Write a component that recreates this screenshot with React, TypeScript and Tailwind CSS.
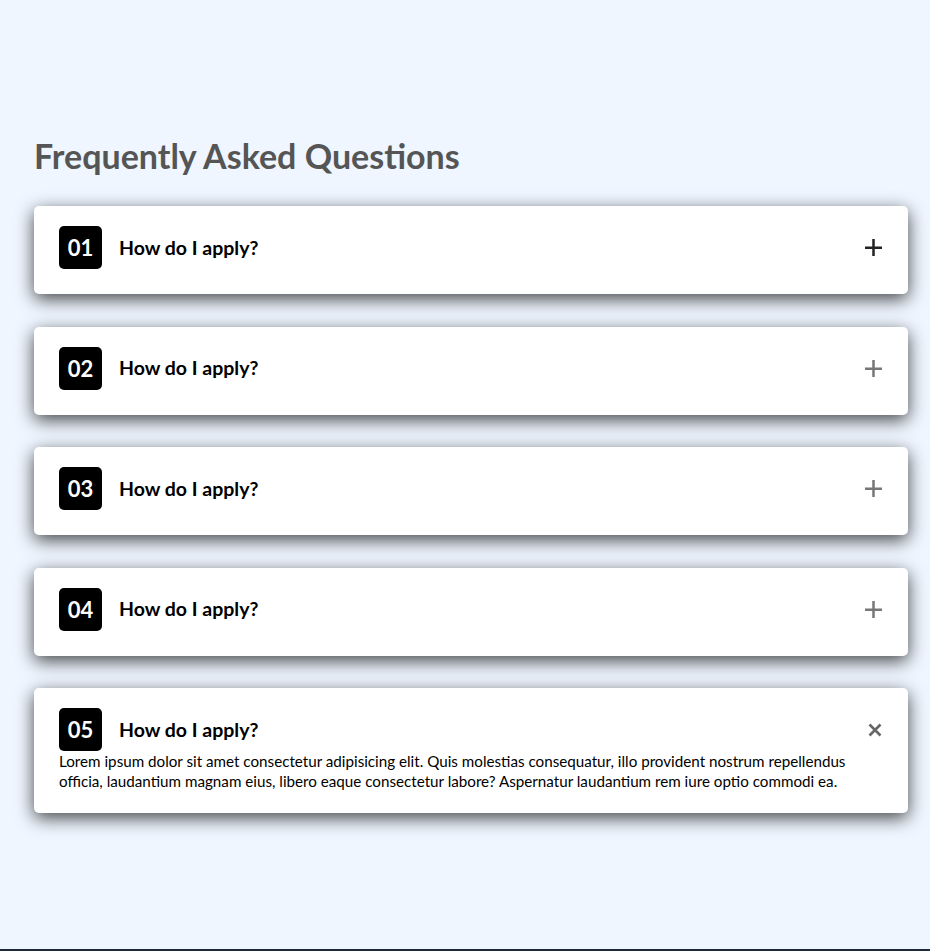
import React from "react";

const items = ["01", "02", "03", "04", "05"];

function PlusIcon({ dark }: { dark: boolean }) {
  return (
    <svg width="17" height="17" viewBox="0 0 17 17" className={dark ? "text-[#222]" : "text-[#777]"}>
      <rect x="0" y="7.5" width="17" height="2.5" fill="currentColor" />
      <rect x="7.25" y="0" width="2.5" height="17" fill="currentColor" />
    </svg>
  );
}

function CloseIcon() {
  return (
    <svg width="14" height="14" viewBox="0 0 14 14" className="text-[#666]">
      <path d="M1.5 1.5 L12.5 12.5 M12.5 1.5 L1.5 12.5" stroke="currentColor" strokeWidth="2.6" strokeLinecap="butt" />
    </svg>
  );
}

export default function App() {
  return (
    <div className="min-h-[951px] bg-[#1f2937]" style={{ fontFamily: '"Lato", "Open Sans", sans-serif' }}>
      <div className="h-[949px] bg-[#eff6ff] pt-[134px]">
        <div className="ml-[34px] w-[874px]">
          <h1 className="text-[34px] leading-[44px] font-bold text-[#555]">Frequently Asked Questions</h1>
          <div className="mt-[28px] flex flex-col gap-[32.5px]">
            {items.map((n, i) => {
              const open = i === 4;
              return (
                <div
                  key={n}
                  className={`bg-white rounded-[5px] pl-[25px] pr-[26px] pt-[20px] ${open ? "pb-[22px]" : "pb-[25px]"} shadow-[0_5px_18px_rgba(0,0,0,0.72)]`}
                >
                  <div className="flex items-center">
                    <div className="w-[43px] h-[43px] rounded-[5px] bg-black text-white flex items-center justify-center text-[22px] font-bold">
                      {n}
                    </div>
                    <div className="ml-[17px] text-[19.5px] font-bold text-black flex-1">How do I apply?</div>
                    {open ? <CloseIcon /> : <PlusIcon dark={i === 0} />}
                  </div>
                  {open && (
                    <p className="text-[15.2px] leading-[20px] text-black">
                      Lorem ipsum dolor sit amet consectetur adipisicing elit. Quis molestias consequatur, illo provident nostrum repellendus officia, laudantium magnam eius, libero eaque consectetur labore? Aspernatur laudantium rem iure optio commodi ea.
                    </p>
                  )}
                </div>
              );
            })}
          </div>
        </div>
      </div>
    </div>
  );
}
